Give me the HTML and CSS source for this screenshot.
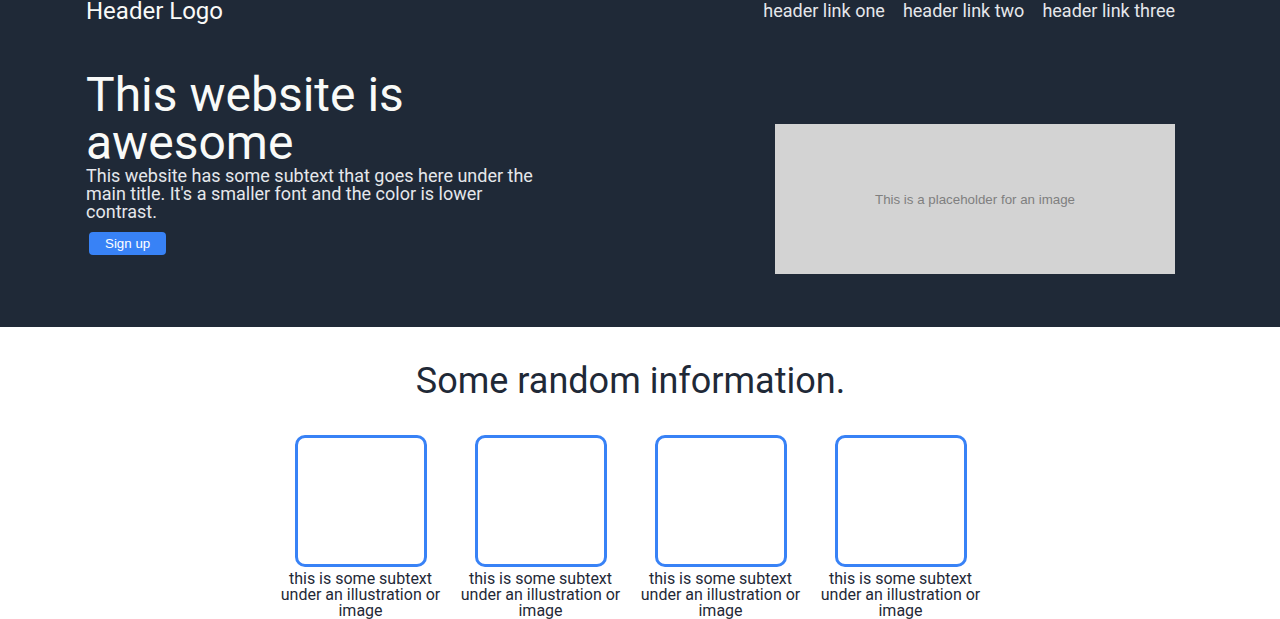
FILE: index.html
```html
<!DOCTYPE html>
<html lang="en">
<head>
<meta charset="utf-8">
<title>Landing Page</title>
<link rel="stylesheet" href="styles.css">
</head>
<body>
  <div class="top">
    <div class="container">
      <header class="header">
        <div class="logo">Header Logo</div>
        <nav class="links">
          <a href="#">header link one</a>
          <a href="#">header link two</a>
          <a href="#">header link three</a>
        </nav>
      </header>
      <section class="hero">
        <div class="hero-text">
          <h1 class="title">This website is awesome</h1>
          <p class="subtext">This website has some subtext that goes here under the main title. It's a smaller font and the color is lower contrast.</p>
          <button class="btn">Sign up</button>
        </div>
        <div class="placeholder">This is a placeholder for an image</div>
      </section>
    </div>
  </div>

  <section class="info">
    <div class="container">
      <h2 class="info-title">Some random information.</h2>
      <div class="cards">
        <div class="card"><div class="card-img"></div><p class="card-text">this is some subtext under an illustration or image</p></div>
        <div class="card"><div class="card-img"></div><p class="card-text">this is some subtext under an illustration or image</p></div>
        <div class="card"><div class="card-img"></div><p class="card-text">this is some subtext under an illustration or image</p></div>
        <div class="card"><div class="card-img"></div><p class="card-text">this is some subtext under an illustration or image</p></div>
      </div>
    </div>
  </section>

  <section class="quote">
    <div class="quote-inner">
      <p class="quote-text">This is an inspiring quote, or a testimonial from a customer. Maybe it's just filling up space, or maybe people will actually read it. Who knows? All I know is that it looks nice.</p>
      <p class="quote-author">-Thor, God of Thunder</p>
    </div>
  </section>

  <section class="cta">
    <div class="cta-box">
      <div class="cta-text">
        <p class="cta-title">Call to action! It's time!</p>
        <p class="cta-sub">Sign up for our product by clicking that button right over there!</p>
      </div>
      <button class="btn btn-outline">Sign up</button>
    </div>
  </section>

  <footer class="footer">Copyright © The Odin Project 2021</footer>
</body>
</html>
```

FILE: styles.css
```css
* {
  box-sizing: border-box;
}

body {
  margin: 0;
  font-family: Roboto, "Liberation Sans", Arial, sans-serif;
  line-height: 1;
  color: #1f2937;
  background: #ffffff;
}

p, h1, h2 {
  margin: 0;
  font-weight: 400;
}

.container {
  width: 1089px;
  margin-left: 86px;
}

.top {
  background: #1f2937;
}

.header {
  display: flex;
  justify-content: space-between;
  align-items: center;
  margin-top: -1px;
}

.logo {
  font-size: 24px;
  color: #f9faf8;
}

.links {
  display: flex;
  gap: 18px;
}

.links a {
  font-size: 18px;
  color: #e5e7eb;
  text-decoration: none;
}

.hero {
  display: flex;
  justify-content: space-between;
  align-items: flex-start;
  padding-top: 48px;
}

.hero-text {
  width: 455px;
}

.title {
  font-size: 48px;
  line-height: 1;
  color: #f9faf8;
}

.subtext {
  font-size: 18px;
  color: #e5e7eb;
}

.btn {
  display: inline-block;
  margin: 11px 0 0 3px;
  padding: 4px 16px;
  height: 23px;
  border: none;
  border-radius: 4px;
  background: #3882f6;
  color: #ffffff;
  font-family: "Liberation Sans", Arial, sans-serif;
  font-size: 13.33px;
  line-height: 15px;
}

.placeholder {
  width: 400px;
  height: 150px;
  margin: 53px 0 53px;
  padding-top: 2px;
  background: #d3d3d3;
  color: #7f7f7f;
  display: flex;
  align-items: center;
  justify-content: center;
  font-family: "Liberation Sans", Arial, sans-serif;
  font-size: 13.33px;
}

.info {
  padding: 36px 0 64px;
}

.info-title {
  font-size: 36px;
  text-align: center;
}

.cards {
  display: flex;
  justify-content: center;
  gap: 20px;
  margin-top: 36px;
}

.card {
  width: 160px;
  display: flex;
  flex-direction: column;
  align-items: center;
}

.card-img {
  width: 132px;
  height: 132px;
  border: 3px solid #3882f6;
  border-radius: 10px;
}

.card-text {
  margin-top: 4px;
  font-size: 16px;
  text-align: center;
  color: #1f2937;
}

.quote {
  background: #e5e7eb;
  padding: 100px 0;
}

.quote-inner {
  width: 800px;
  margin: 0 auto;
}

.quote-text {
  font-size: 36px;
  font-style: italic;
  font-weight: 300;
  line-height: 1.2;
  color: #1f2937;
}

.quote-author {
  margin-top: 16px;
  font-size: 24px;
  font-weight: 700;
  text-align: right;
}

.cta {
  padding: 100px 0;
}

.cta-box {
  width: 800px;
  margin: 0 auto;
  padding: 50px 100px;
  background: #3882f6;
  border-radius: 8px;
  display: flex;
  justify-content: space-between;
  align-items: center;
  color: #ffffff;
}

.cta-title {
  font-size: 20px;
  font-weight: 700;
}

.cta-sub {
  margin-top: 6px;
  font-size: 16px;
  width: 360px;
}

.btn-outline {
  margin: 0;
  height: auto;
  padding: 8px 24px;
  border: 2px solid #ffffff;
  border-radius: 8px;
}

.footer {
  background: #1f2937;
  color: #f9faf8;
  text-align: center;
  padding: 40px 0;
  font-size: 16px;
}
```
